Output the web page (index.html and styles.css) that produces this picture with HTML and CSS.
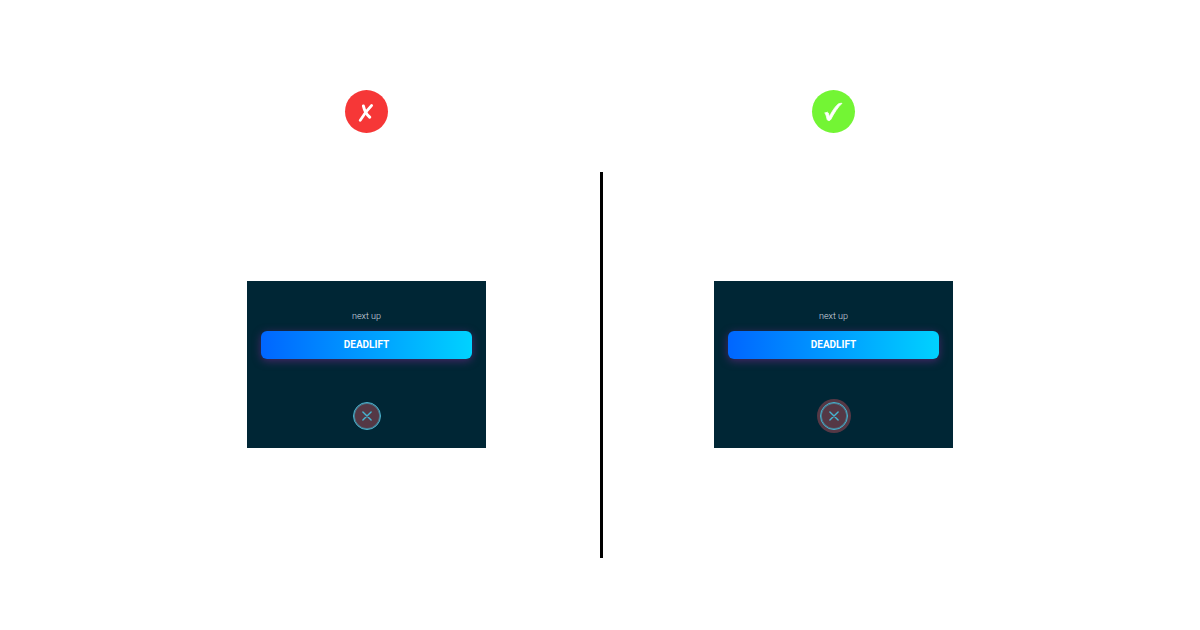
FILE: index.html
```html
<!DOCTYPE html>
<html lang="en">
<head>
<meta charset="utf-8">
<meta name="viewport" content="width=device-width,initial-scale=1.0">
<title>Touch target</title>
<link rel="stylesheet" href="styles.css">
</head>
<body>
	<main class="compare">
		<!-- bad -->
		<div class="mark bad">
			<svg viewBox="0 0 43 43" aria-label="Wrong">
				<path d="M18.4 16C19.4 20.4 21.4 24.6 24.8 27.2" stroke-width="3"/>
				<path d="M26.6 15.4C22.4 19.5 18.4 25 15.2 30.4" stroke-width="2.8"/>
			</svg>
		</div>
		<!-- good -->
		<div class="mark good">
			<svg viewBox="0 0 43 43" aria-label="Right">
				<path d="M13.2 23L15.4 22.2C16.6 22.6 17 25 17.2 26.8C20 21.6 23.2 16.4 25.8 14.4C26.8 13.5 28.6 13.2 30 13.3C25.8 17.2 21.8 23.6 18.8 29.4C18 30.9 15.6 31 15.2 29.6C14.6 27.4 14.2 24.8 13.2 23Z" fill="#fff" stroke-width="0.8"/>
			</svg>
		</div>
		<section class="side">
			<div class="card">
				<p>next up</p>
				<button class="next" type="button">DEADLIFT</button>
				<button class="close" type="button" aria-label="Close">
					<svg viewBox="0 0 10 10"><path d="M0.9 0.9L9.1 9.1M9.1 0.9L0.9 9.1"/></svg>
				</button>
			</div>
		</section>
		<section class="side divided">
			<div class="card">
				<p>next up</p>
				<button class="next" type="button">DEADLIFT</button>
				<button class="close large" type="button" aria-label="Close">
					<svg viewBox="0 0 10 10"><path d="M0.9 0.9L9.1 9.1M9.1 0.9L0.9 9.1"/></svg>
				</button>
			</div>
		</section>
	</main>
</body>
</html>
```

FILE: styles.css
```css
* { box-sizing: border-box; }
body { margin: 0; background: #fff; font-family: Roboto, "Liberation Sans", sans-serif; }
button { border: 0; padding: 0; font-family: inherit; cursor: pointer; }
svg { display: block; fill: none; stroke-linecap: round; stroke-linejoin: round; }

.compare { max-width: 934px; margin: 0 auto; padding: 90px 0 72px; display: grid; grid-template-columns: 1fr 1fr; row-gap: 39px; justify-items: center; }

.mark { width: 43px; height: 43px; border-radius: 50%; }
.mark svg { stroke: #fff; }
.bad { background: #f63737; }
.good { background: #73f534; }

.side { width: 100%; min-height: 386px; padding-bottom: 2px; display: flex; align-items: center; justify-content: center; }
.divided { border-left: 3px solid #000; padding-right: 3px; }

.card { width: 239px; padding: 28px 14px 15px; background: #002635; display: flex; flex-direction: column; align-items: center; }
.card p { margin: 0 0 8px; font-size: 9px; line-height: 14px; font-weight: 300; color: #d5dde0; }
.next { width: 100%; height: 28px; margin-bottom: 40px; border-radius: 6px; background: linear-gradient(90deg, #0066ff, #00d2ff); box-shadow: 0 2px 9px rgba(120, 40, 140, 0.6); color: #fff; font-size: 10px; line-height: 12px; font-weight: 700; }

.close { position: relative; width: 34px; height: 34px; border-radius: 50%; background: none; display: flex; align-items: center; justify-content: center; }
.close::before { content: ""; position: absolute; inset: 3px; border: 1px solid #45b4d0; border-radius: 50%; background: #553845; box-shadow: inset 0 0 0 1px rgba(69, 180, 208, 0.5); }
.close svg { position: relative; width: 10px; height: 10px; stroke: #45b4d0; stroke-width: 1.4; }
.large { background: #553845; }
```
